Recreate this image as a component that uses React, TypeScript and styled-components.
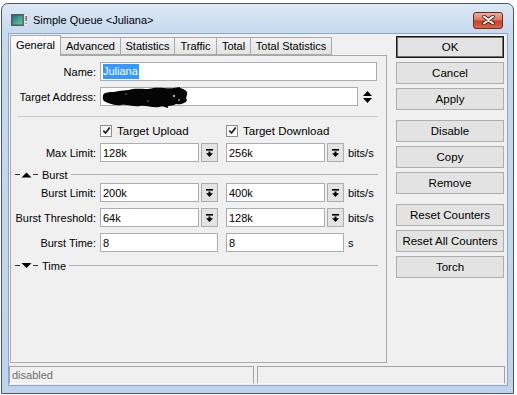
import styled, { createGlobalStyle } from "styled-components"

const GlobalStyle = createGlobalStyle`
    body {
        margin: 0;
        background: #ffffff;
        font-family: "Liberation Sans", Arial, sans-serif;
        font-size: 11px;
        color: #000;
    }
`

const tabs = [
    { id: 1, text: "General", w: 51 },
    { id: 2, text: "Advanced", w: 61 },
    { id: 3, text: "Statistics", w: 55 },
    { id: 4, text: "Traffic", w: 43 },
    { id: 5, text: "Total", w: 35 },
    { id: 6, text: "Total Statistics", w: 82 },
]

const sideGroups = [
    ["OK", "Cancel", "Apply"],
    ["Disable", "Copy", "Remove"],
    ["Reset Counters", "Reset All Counters", "Torch"],
]

const Window = styled.div`
    margin: 3px 0 0 1px;
    width: 513px;
    height: 391px;
    box-sizing: border-box;
    border: 1px solid #46576b;
    border-radius: 7px 7px 0 0;
    background: linear-gradient(#dce8f5, #c6d9ef 30px, #bfd4ec);
    padding: 0 5px 7px 6px;
    display: flex;
    flex-direction: column;
`
const TitleBar = styled.div`
    height: 29px;
    padding: 3px 0 0 3px;
    box-sizing: border-box;
    display: flex;
    align-items: center;
`
const Title = styled.span`
    margin-left: 5px;
    font-size: 11px;
`
const CloseButton = styled.div`
    margin-left: auto;
    margin-right: 5px;
    width: 30px;
    height: 17px;
    box-sizing: border-box;
    border: 1px solid #6b2b1d;
    border-radius: 3px;
    background: linear-gradient(#eab1a2, #d97a62 45%, #c5432a 55%, #d4674b);
    display: flex;
    align-items: center;
    justify-content: center;
`
const Client = styled.div`
    height: 353px;
    box-sizing: border-box;
    border: 1px solid #8ea6c2;
    background: #f0f0f0;
    display: flex;
    flex-direction: column;
`
const TopRow = styled.div`
    height: 329px;
    padding: 1px 0 0 1px;
    box-sizing: border-box;
    display: flex;
`
const Main = styled.div`
    width: 377px;
    display: flex;
    flex-direction: column;
`
const TabStrip = styled.div`
    height: 20px;
    display: flex;
    align-items: flex-end;
    position: relative;
    z-index: 1;
`
const Tab = styled.div<{ $active?: boolean; $w: number }>`
    width: ${p => p.$w}px;
    height: ${p => (p.$active ? 21 : 18)}px;
    margin-bottom: ${p => (p.$active ? -1 : 0)}px;
    margin-left: -1px;
    box-sizing: border-box;
    border: 1px solid #a9a9a9;
    border-bottom: ${p => (p.$active ? "none" : "1px solid #a9a9a9")};
    background: ${p => (p.$active ? "linear-gradient(#fbfbfb, #f0f0f0)" : "linear-gradient(#f2f2f2, #e4e4e4)")};
    padding-bottom: ${p => (p.$active ? 3 : 0)}px;
    display: flex;
    align-items: center;
    justify-content: center;
    white-space: nowrap;
    &:first-child {
        margin-left: 0;
    }
`
const Panel = styled.div`
    height: 308px;
    box-sizing: border-box;
    border: 1px solid #a9a9a9;
    background: #f0f0f0;
    display: flex;
    flex-direction: column;
`
const FormRow = styled.div<{ $mt: number }>`
    display: flex;
    align-items: center;
    height: 19px;
    margin-top: ${p => p.$mt}px;
`
const Label = styled.div`
    width: 89px;
    flex-shrink: 0;
    padding-right: 4px;
    box-sizing: border-box;
    text-align: right;
    white-space: nowrap;
`
const Group = styled.div<{ $mr?: number }>`
    display: flex;
    gap: 2px;
    margin-right: ${p => p.$mr ?? 0}px;
`
const Field = styled.div<{ $w: number }>`
    width: ${p => p.$w}px;
    height: 19px;
    box-sizing: border-box;
    border: 1px solid #abadb3;
    background: #ffffff;
    padding-left: 2px;
    display: flex;
    align-items: center;
    white-space: nowrap;
`
const Selected = styled.span`
    background: #3399ff;
    color: #ffffff;
    padding: 1px 1px 2px 0;
`
const DropButton = styled.div`
    width: 17px;
    height: 19px;
    box-sizing: border-box;
    border: 1px solid #adadad;
    background: #e3e3e3;
    display: flex;
    align-items: center;
    justify-content: center;
`
const Unit = styled.span`
    margin-left: 4px;
`
const Separator = styled.div`
    margin: 10px 0 0 7px;
    width: 360px;
    height: 1px;
    background: #c8c8c8;
`
const CheckRow = styled.div`
    display: flex;
    align-items: center;
    height: 15px;
    margin: 6px 0 0 89px;
`
const CheckItem = styled.div<{ $w?: number }>`
    width: ${p => (p.$w ? `${p.$w}px` : "auto")};
    display: flex;
    align-items: center;
    gap: 5px;
    font-size: 11.5px;
`
const CheckBox = styled.div`
    width: 12px;
    height: 12px;
    box-sizing: border-box;
    border: 1px solid #8f8f8f;
    background: linear-gradient(#f4f4f4, #ffffff);
    display: flex;
    align-items: center;
    justify-content: center;
`
const SectionHead = styled.div<{ $mt: number }>`
    display: flex;
    align-items: center;
    height: 13px;
    width: 363px;
    margin: ${p => p.$mt}px 0 0 4px;
`
const SectionTitle = styled.span`
    margin-left: 3px;
`
const SectionLine = styled.div`
    flex: 1;
    height: 1px;
    margin-left: 3px;
    background: #b4b4b4;
`
const Side = styled.div`
    width: 108px;
    margin-left: 9px;
    display: flex;
    flex-direction: column;
`
const SideGroup = styled.div<{ $mt: number }>`
    display: flex;
    flex-direction: column;
    gap: 4px;
    margin-top: ${p => p.$mt}px;
`
const SideButton = styled.div<{ $default?: boolean }>`
    height: 22px;
    box-sizing: border-box;
    border: 1px solid ${p => (p.$default ? "#1a1a1a" : "#adadad")};
    box-shadow: ${p => (p.$default ? "inset 0 0 0 1px #6e6e6e" : "none")};
    background: #e3e3e3;
    display: flex;
    align-items: center;
    justify-content: center;
    font-size: 11.5px;
    white-space: nowrap;
`
const StatusBar = styled.div`
    height: 18px;
    margin: 3px 2px 0 0;
    display: flex;
    gap: 3px;
`
const StatusCell = styled.div<{ $w: number }>`
    width: ${p => p.$w}px;
    box-sizing: border-box;
    border: 1px solid #a3a3a3;
    border-bottom-color: #f8f8f8;
    color: #6d6d6d;
    padding-left: 2px;
    display: flex;
    align-items: center;
`

const AppIcon = () => (
    <svg width="17" height="12" viewBox="0 0 17 12">
        <defs>
            <linearGradient id="scr" x1="0" y1="0" x2="1" y2="1">
                <stop offset="0" stopColor="#1b6f86" />
                <stop offset="1" stopColor="#78c99a" />
            </linearGradient>
        </defs>
        <rect x="0" y="0" width="13" height="12" fill="#4d5863" />
        <rect x="1.5" y="1.5" width="10" height="9" fill="url(#scr)" />
        <rect x="13" y="0" width="4" height="12" fill="#ffffff" stroke="#8a949e" strokeWidth="0.6" />
        <rect x="14.5" y="2" width="1.2" height="5" fill="#3a3a3a" />
        <rect x="14.5" y="8.5" width="1.2" height="1.2" fill="#3a3a3a" />
    </svg>
)

const CloseIcon = () => (
    <svg width="13" height="10" viewBox="0 0 13 10">
        <path d="M2 1.5L11 8.5M11 1.5L2 8.5" stroke="#4a1d12" strokeWidth="3.6" strokeLinecap="round" />
        <path d="M2 1.5L11 8.5M11 1.5L2 8.5" stroke="#ffffff" strokeWidth="2" strokeLinecap="round" />
    </svg>
)

const DropIcon = () => (
    <svg width="7" height="8" viewBox="0 0 7 8">
        <rect x="0" y="0" width="7" height="1.6" fill="#000" />
        <path d="M2.5 2.6H4.5V4.3H7L3.5 8L0 4.3H2.5Z" fill="#000" />
    </svg>
)

const UpDownIcon = () => (
    <svg width="9" height="12" viewBox="0 0 9 12" style={{ marginLeft: 5 }}>
        <path d="M4.5 0L9 5H0Z" fill="#000" />
        <path d="M0 7H9L4.5 12Z" fill="#000" />
    </svg>
)

const CheckIcon = () => (
    <svg width="9" height="9" viewBox="0 0 9 9">
        <path d="M1.3 4.6L3.6 7L7.7 1.6" stroke="#1e1e1e" strokeWidth="1.7" fill="none" />
    </svg>
)

const Toggle = ({ open }: { open: boolean }) => (
    <svg width="24" height="7" viewBox="0 0 24 7">
        <rect x="0" y="3" width="5" height="1" fill="#333" />
        {open ? <path d="M6.5 6.5L11.5 1.5L16.5 6.5Z" fill="#000" /> : <path d="M6.5 1L16.5 1L11.5 6Z" fill="#000" />}
        <rect x="18" y="3" width="5" height="1" fill="#333" />
    </svg>
)

const Redacted = () => (
    <svg width="86" height="21" viewBox="0 0 86 21" style={{ marginLeft: -1, marginTop: 1, flexShrink: 0 }}>
        <path
            d="M1 8C3 5 7 5 12 5C18 3 25 4 31 2C38 1 45 3 51 1C58 0 66 2 72 1C78 0 83 2 85 5C86 8 83 10 85 13C84 16 79 18 74 17C69 20 63 18 57 20C50 21 44 18 38 19C31 20 25 17 19 18C12 19 6 16 2 14C0 12 1 10 1 8Z"
            fill="#050505"
        />
        <path d="M3 10L9 12L16 16M60 18L66 20M70 3L78 1" stroke="#050505" strokeWidth="2" fill="none" />
        <circle cx="72" cy="9" r="0.9" fill="#fff" />
        <circle cx="77" cy="13" r="0.8" fill="#fff" />
        <circle cx="24" cy="7" r="0.6" fill="#fff" />
        <circle cx="46" cy="14" r="0.6" fill="#fff" />
    </svg>
)

const RateRow = ({ label, a, b, mt }: { label: string; a: string; b: string; mt: number }) => (
    <FormRow $mt={mt}>
        <Label>{label}</Label>
        <Group $mr={8}>
            <Field $w={99}>{a}</Field>
            <DropButton><DropIcon /></DropButton>
        </Group>
        <Group>
            <Field $w={99}>{b}</Field>
            <DropButton><DropIcon /></DropButton>
        </Group>
        <Unit>bits/s</Unit>
    </FormRow>
)

export default function App() {
    return (
        <>
            <GlobalStyle />
            <Window>
                <TitleBar>
                    <AppIcon />
                    <Title>Simple Queue &lt;Juliana&gt;</Title>
                    <CloseButton><CloseIcon /></CloseButton>
                </TitleBar>
                <Client>
                    <TopRow>
                        <Main>
                            <TabStrip>
                                {tabs.map(t => (
                                    <Tab key={t.id} $w={t.w} $active={t.id === 1}>{t.text}</Tab>
                                ))}
                            </TabStrip>
                            <Panel>
                                <FormRow $mt={6}>
                                    <Label>Name:</Label>
                                    <Field $w={277}><Selected>Juliana</Selected></Field>
                                </FormRow>
                                <FormRow $mt={6}>
                                    <Label>Target Address:</Label>
                                    <Field $w={258}><Redacted /></Field>
                                    <UpDownIcon />
                                </FormRow>
                                <Separator />
                                <CheckRow>
                                    <CheckItem $w={126}><CheckBox><CheckIcon /></CheckBox>Target Upload</CheckItem>
                                    <CheckItem><CheckBox><CheckIcon /></CheckBox>Target Download</CheckItem>
                                </CheckRow>
                                <RateRow label="Max Limit:" a="128k" b="256k" mt={5} />
                                <SectionHead $mt={6}>
                                    <Toggle open />
                                    <SectionTitle>Burst</SectionTitle>
                                    <SectionLine />
                                </SectionHead>
                                <RateRow label="Burst Limit:" a="200k" b="400k" mt={2} />
                                <RateRow label="Burst Threshold:" a="64k" b="128k" mt={6} />
                                <FormRow $mt={6}>
                                    <Label>Burst Time:</Label>
                                    <Group $mr={8}>
                                        <Field $w={118}>8</Field>
                                    </Group>
                                    <Field $w={118}>8</Field>
                                    <Unit>s</Unit>
                                </FormRow>
                                <SectionHead $mt={7}>
                                    <Toggle open={false} />
                                    <SectionTitle>Time</SectionTitle>
                                    <SectionLine />
                                </SectionHead>
                            </Panel>
                        </Main>
                        <Side>
                            {sideGroups.map((g, i) => (
                                <SideGroup key={i} $mt={i === 0 ? 1 : 10}>
                                    {g.map(text => (
                                        <SideButton key={text} $default={text === "OK"}>{text}</SideButton>
                                    ))}
                                </SideGroup>
                            ))}
                        </Side>
                    </TopRow>
                    <StatusBar>
                        <StatusCell $w={245}>disabled</StatusCell>
                        <StatusCell $w={249} />
                    </StatusBar>
                </Client>
            </Window>
        </>
    )
}
